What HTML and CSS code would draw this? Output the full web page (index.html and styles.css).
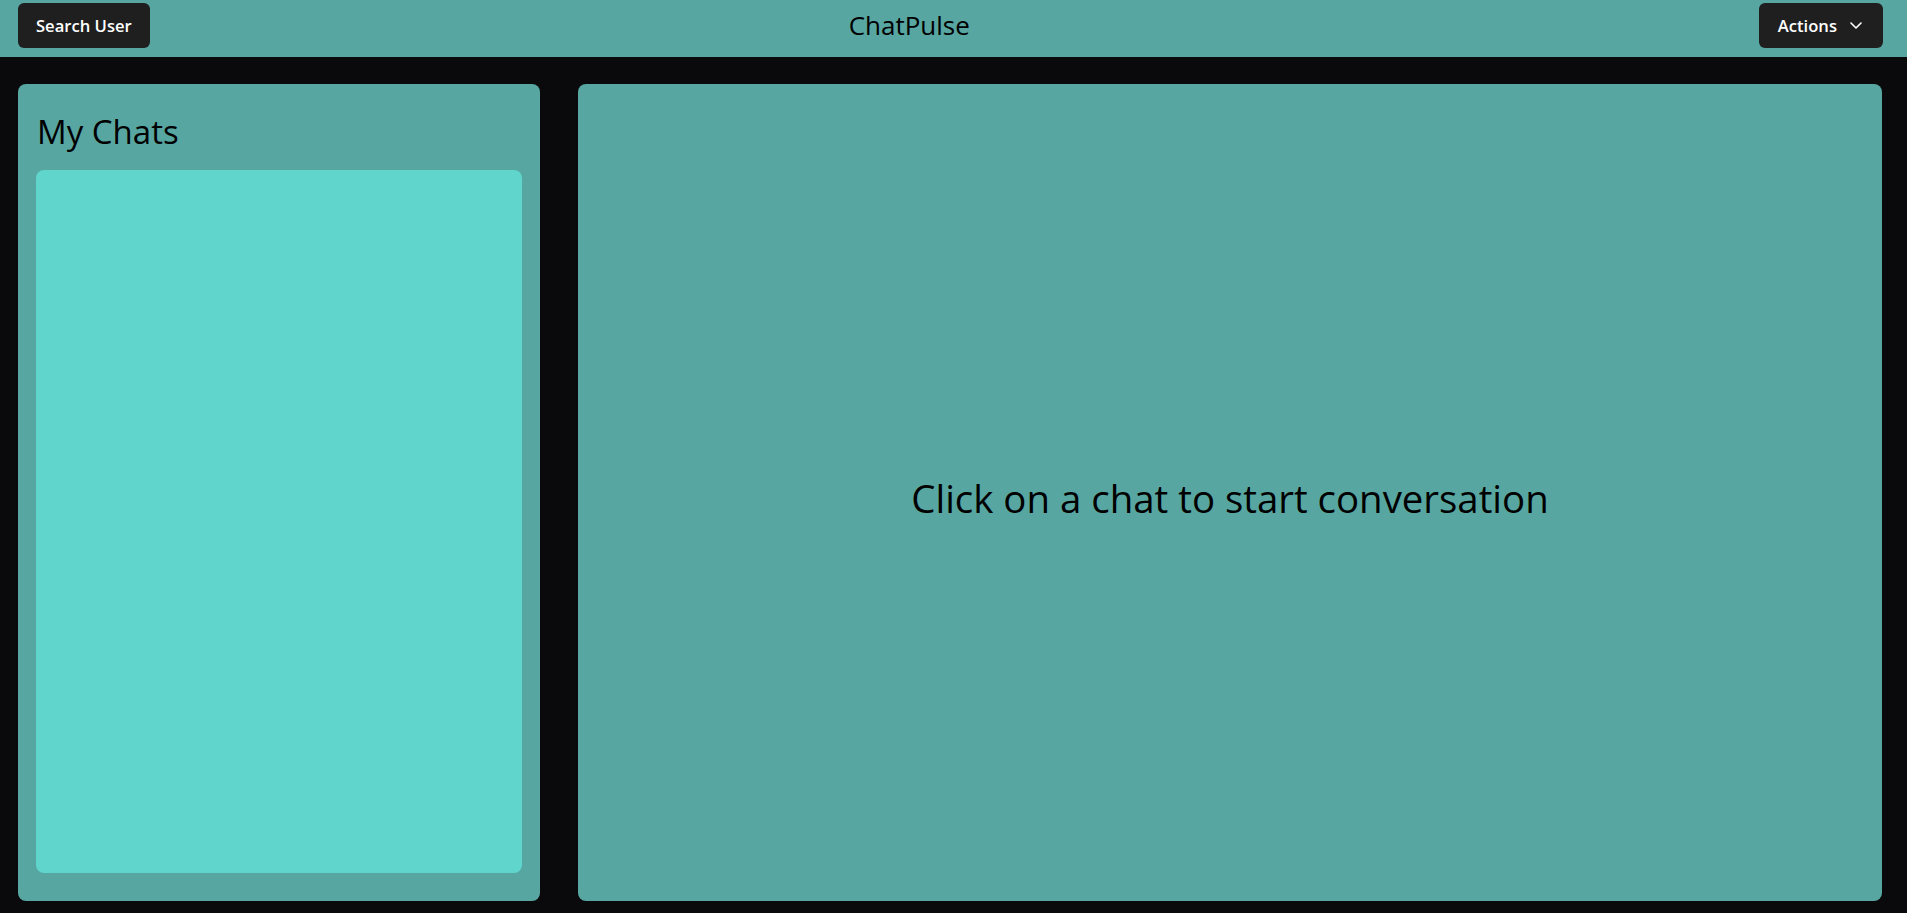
FILE: index.html
```html
<!DOCTYPE html>
<html lang="en">
<head>
<meta charset="utf-8">
<title>ChatPulse</title>
<link rel="stylesheet" href="styles.css">
</head>
<body>
<div class="app">
  <header class="topbar">
    <button class="btn">Search User</button>
    <div class="brand">ChatPulse</div>
    <button class="btn btn-menu">Actions
      <svg class="chev" width="12" height="7" viewBox="0 0 12 7" aria-hidden="true"><path d="M1 1l5 5 5-5" fill="none" stroke="#fff" stroke-width="1.6" stroke-linecap="round" stroke-linejoin="round"/></svg>
    </button>
  </header>
  <main class="main">
    <section class="chats">
      <h2 class="chats-title">My Chats</h2>
      <div class="chats-list"></div>
    </section>
    <section class="chatbox">
      <p class="empty">Click on a chat to start conversation</p>
    </section>
  </main>
</div>
</body>
</html>
```

FILE: styles.css
```css
* { box-sizing: border-box; }
html, body { margin: 0; height: 100%; }
body {
  background: #0a0a0c;
  font-family: "Open Sans", "Noto Sans", sans-serif;
  color: #000;
}
.app {
  height: 913px;
  display: flex;
  flex-direction: column;
}
.topbar {
  height: 57px;
  flex: none;
  background: #57a6a1;
  display: flex;
  align-items: flex-start;
  justify-content: space-between;
  padding: 3px 24px 0 18px;
}
.btn {
  height: 45px;
  border: none;
  border-radius: 6px;
  background: #1f1f1f;
  color: #fff;
  font-family: "Open Sans", sans-serif;
  font-weight: 600;
  font-size: 16.6px;
  padding: 0 18px;
  display: flex;
  align-items: center;
  gap: 13px;
}
.btn-menu { padding: 0 21px 0 19px; }
.chev { display: block; }
.brand {
  font-size: 26px;
  line-height: 45px;
  margin-right: 90px;
}
.main {
  flex: 1;
  display: flex;
  gap: 38px;
  padding: 27px 25px 12px 18px;
}
.chats {
  width: 522px;
  flex: none;
  background: #57a6a1;
  border-radius: 8px;
  padding: 0 18px 28px 18px;
  display: flex;
  flex-direction: column;
}
.chats-title {
  margin: 0;
  font-weight: 400;
  font-size: 33px;
  line-height: 45px;
  height: 86px;
  padding: 25px 0 0 1px;
}
.chats-list {
  flex: 1;
  background: #5fd5cc;
  border-radius: 8px;
}
.chatbox {
  flex: 1;
  background: #57a6a1;
  border-radius: 8px;
  display: flex;
  align-items: center;
  justify-content: center;
}
.empty {
  margin: 10px 0 0 0;
  font-size: 38.4px;
}
```
